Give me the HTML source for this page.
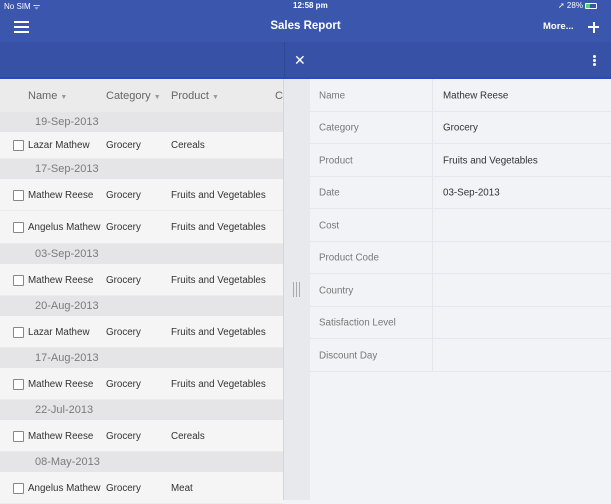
<!DOCTYPE html>
<html><head><style>
*{margin:0;padding:0;box-sizing:border-box}
body{width:611px;height:500px;overflow:hidden;position:relative;font-family:"Liberation Sans",sans-serif;background:#f2f3f7}
.a{position:absolute}
.g{position:absolute;left:0;width:283px;height:20px;background:#e5e5e7;color:#7a7a80;font-size:11px;line-height:21px;padding-left:35px}
.r{position:absolute;left:0;width:283px;background:#f5f5f5;border-bottom:1px solid #ececec;font-size:9.8px;color:#333}
.r span{position:absolute;top:50%;transform:translateY(-45%)}
.cb{position:absolute;left:13px;top:50%;margin-top:-5px;width:11px;height:11px;border:1px solid #888;background:#fff;border-radius:1px}
.d{position:absolute;left:310px;width:301px;height:32.5px;border-bottom:1px solid #e6e7ec;font-size:9.8px;color:#777}
.d span{position:absolute;top:50%;transform:translateY(-40%)}
.d .k{left:9px}.d .v{left:133px;color:#333}
</style></head><body>
<div class="a" style="left:0;top:0;width:611px;height:42px;background:#3a56ad"></div>
<div class="a" style="left:4px;top:1px;color:#fff;font-size:8px">No SIM ᯤ</div>
<div class="a" style="left:293px;top:1px;color:#fff;font-size:8px;font-weight:bold">12:58 pm</div>
<div class="a" style="left:558px;top:1px;color:#fff;font-size:8px">➚ 28%</div>
<div class="a" style="left:585px;top:3px;width:12px;height:6px;border:1px solid #fff;border-radius:1px"><div style="width:4px;height:4px;background:#4cd964"></div></div>
<div class="a" style="left:14px;top:21px;width:15px;height:2px;background:#fff;box-shadow:0 5px 0 #fff,0 10px 0 #fff"></div>
<div class="a" style="left:0;top:20px;width:611px;text-align:center;color:#fff;font-size:11.5px;font-weight:bold">Sales Report</div>
<div class="a" style="left:543px;top:21px;color:#fff;font-size:9.5px;font-weight:bold">More...</div>
<div class="a" style="left:588px;top:26px;width:11px;height:2px;background:#fff"></div>
<div class="a" style="left:592.5px;top:21.5px;width:2px;height:11px;background:#fff"></div>
<div class="a" style="left:0;top:42px;width:611px;height:37px;background:#3651a5;border-bottom:2px solid #2a49c0"></div>
<div class="a" style="left:284px;top:42px;width:1px;height:37px;background:#2f4894"></div>
<div class="a" style="left:294px;top:51px;color:#fff;font-size:14px;line-height:18px">✕</div>
<div class="a" style="left:593px;top:55px;width:3px;height:3px;background:#fff;border-radius:50%;box-shadow:0 4px 0 #fff,0 8px 0 #fff"></div>
<div class="a" style="left:0;top:79px;width:283px;height:421px;background:#f5f5f5"></div>
<div class="a" style="left:0;top:79px;width:283px;height:33px;background:#ebebeb;color:#666;font-size:11px">
<span class="a" style="left:28px;top:11px">Name <span style="font-size:7px;color:#999">▼</span></span>
<span class="a" style="left:106px;top:11px">Category <span style="font-size:7px;color:#999">▼</span></span>
<span class="a" style="left:171px;top:11px">Product <span style="font-size:7px;color:#999">▼</span></span>
<span class="a" style="left:275px;top:11px">Co</span></div>
<div class="g" style="top:112px">19-Sep-2013</div>
<div class="r" style="top:132px;height:27px"><div class="cb"></div><span style="left:28px">Lazar Mathew</span><span style="left:106px">Grocery</span><span style="left:171px">Cereals</span></div>
<div class="g" style="top:159px">17-Sep-2013</div>
<div class="r" style="top:179px;height:32px"><div class="cb"></div><span style="left:28px">Mathew Reese</span><span style="left:106px">Grocery</span><span style="left:171px">Fruits and Vegetables</span></div>
<div class="r" style="top:211px;height:33px"><div class="cb"></div><span style="left:28px">Angelus Mathew</span><span style="left:106px">Grocery</span><span style="left:171px">Fruits and Vegetables</span></div>
<div class="g" style="top:244px">03-Sep-2013</div>
<div class="r" style="top:264px;height:32px"><div class="cb"></div><span style="left:28px">Mathew Reese</span><span style="left:106px">Grocery</span><span style="left:171px">Fruits and Vegetables</span></div>
<div class="g" style="top:296px">20-Aug-2013</div>
<div class="r" style="top:316px;height:32px"><div class="cb"></div><span style="left:28px">Lazar Mathew</span><span style="left:106px">Grocery</span><span style="left:171px">Fruits and Vegetables</span></div>
<div class="g" style="top:348px">17-Aug-2013</div>
<div class="r" style="top:368px;height:32px"><div class="cb"></div><span style="left:28px">Mathew Reese</span><span style="left:106px">Grocery</span><span style="left:171px">Fruits and Vegetables</span></div>
<div class="g" style="top:400px">22-Jul-2013</div>
<div class="r" style="top:420px;height:32px"><div class="cb"></div><span style="left:28px">Mathew Reese</span><span style="left:106px">Grocery</span><span style="left:171px">Cereals</span></div>
<div class="g" style="top:452px">08-May-2013</div>
<div class="r" style="top:472px;height:32px"><div class="cb"></div><span style="left:28px">Angelus Mathew</span><span style="left:106px">Grocery</span><span style="left:171px">Meat</span></div>
<div class="a" style="left:283px;top:79px;width:27px;height:421px;background:#e8e9ed;border-left:1px solid #d5d6da"></div>
<div class="a" style="left:293px;top:282px;width:7px;height:15px;border-left:1px solid #aaa;border-right:1px solid #aaa"><div style="margin-left:2px;width:1px;height:15px;background:#aaa"></div></div>
<div class="a" style="left:432px;top:79px;width:1px;height:293px;background:#e6e7ec"></div>
<div class="d" style="top:79px"><span class="k">Name</span><span class="v">Mathew Reese</span></div>
<div class="d" style="top:111.5px"><span class="k">Category</span><span class="v">Grocery</span></div>
<div class="d" style="top:144px"><span class="k">Product</span><span class="v">Fruits and Vegetables</span></div>
<div class="d" style="top:176.5px"><span class="k">Date</span><span class="v">03-Sep-2013</span></div>
<div class="d" style="top:209px"><span class="k">Cost</span></div>
<div class="d" style="top:241.5px"><span class="k">Product Code</span></div>
<div class="d" style="top:274px"><span class="k">Country</span></div>
<div class="d" style="top:306.5px"><span class="k">Satisfaction Level</span></div>
<div class="d" style="top:339px"><span class="k">Discount Day</span></div>
</body></html>
